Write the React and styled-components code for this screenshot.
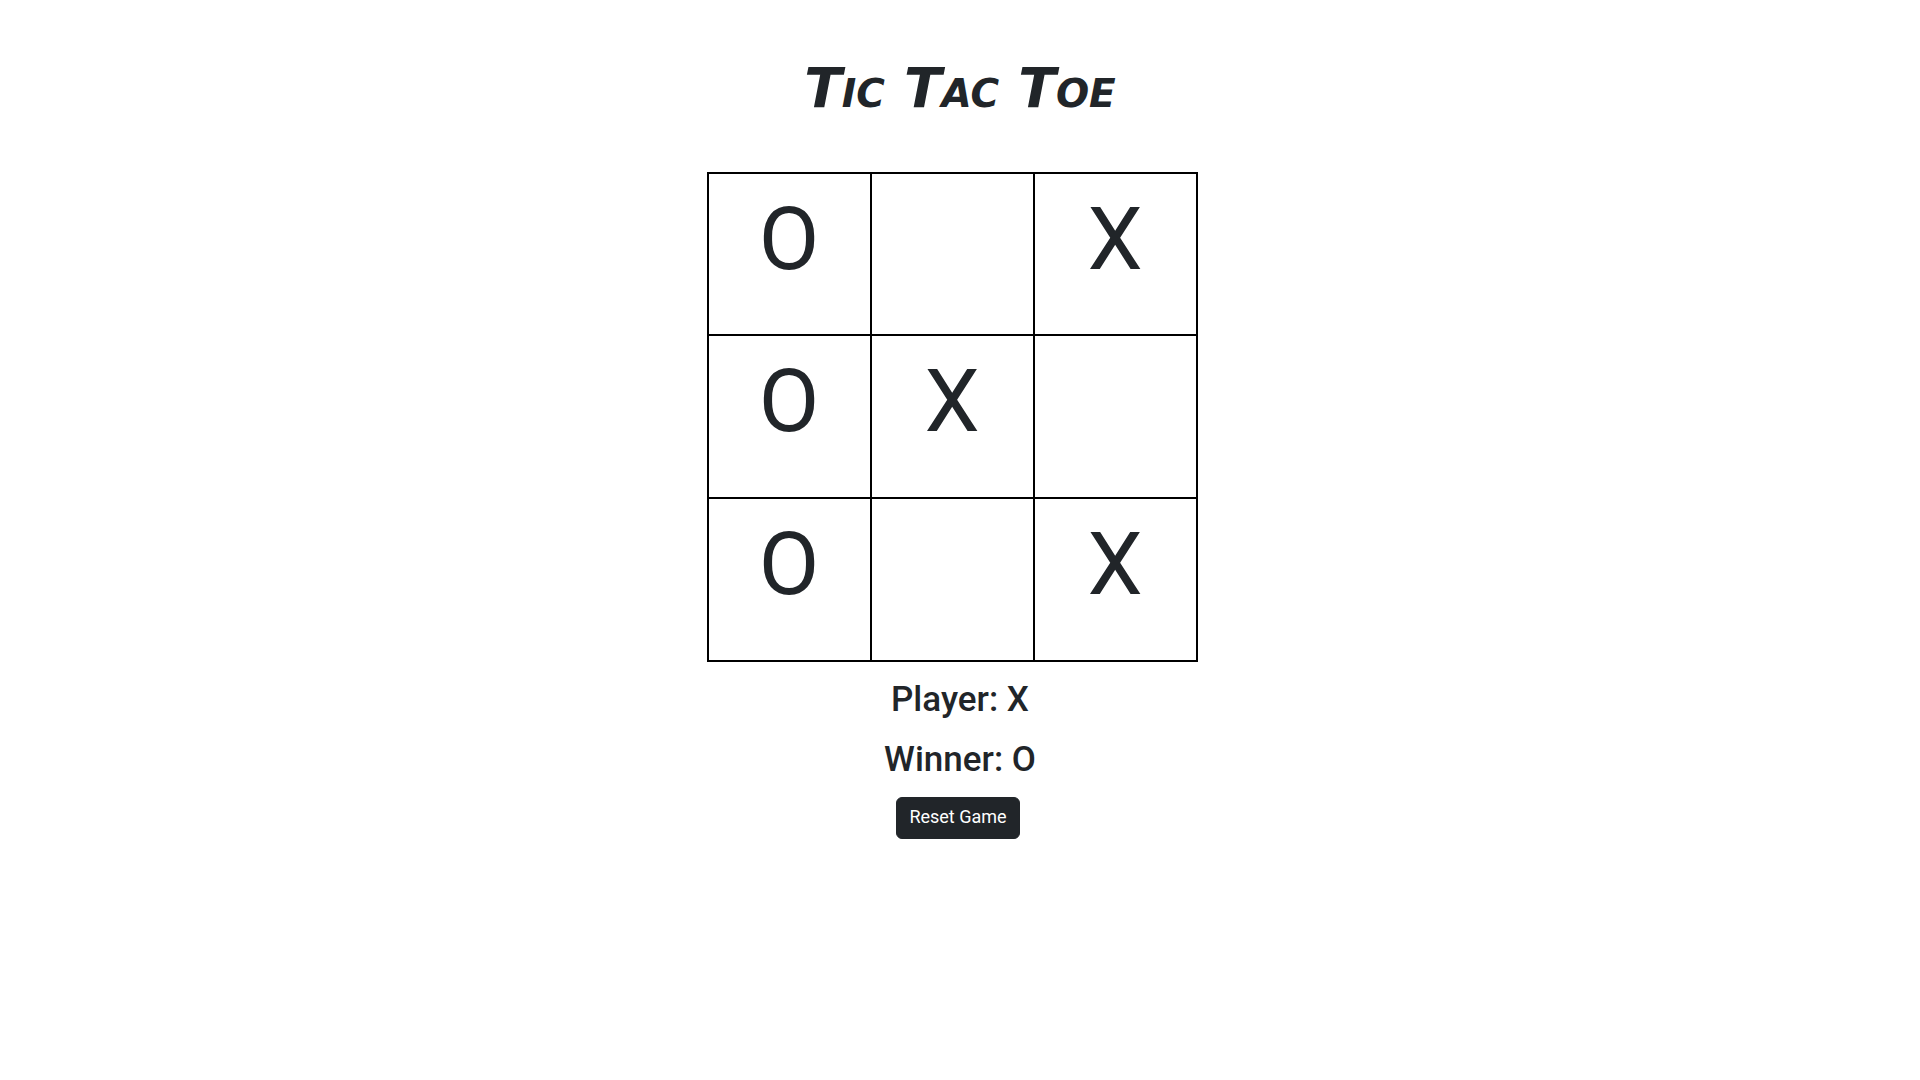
import React, { useState } from "react";
import styled, { createGlobalStyle } from "styled-components";

const GlobalStyle = createGlobalStyle`
  *, *::before, *::after { box-sizing: border-box; }
  body {
    margin: 0;
    background: #fff;
    color: #212529;
    font-family: Roboto, "Liberation Sans", sans-serif;
  }
`;

const Page = styled.main`
  display: flex;
  flex-direction: column;
  align-items: center;
  padding: 48px 16px;
`;

const Title = styled.h1`
  margin: 0 0 44px;
  font-family: "Permanent Marker", "DejaVu Sans", sans-serif;
  font-size: 55px;
  font-weight: 700;
  font-style: italic;
  font-variant: small-caps;
  line-height: 80px;
`;

const Board = styled.div`
  display: grid;
  grid-template-columns: repeat(3, 163px);
  grid-template-rows: 162px 163px 163px;
  margin-right: 16px;
  border: solid #000;
  border-width: 2px 0 0 2px;
`;

const Cell = styled.button`
  display: flex;
  align-items: flex-start;
  justify-content: center;
  padding: 0;
  border: solid #000;
  border-width: 0 2px 2px 0;
  background: #fff;
  color: inherit;
  font-family: inherit;
  font-size: 88px;
  line-height: 130px;
  cursor: pointer;
`;

const Status = styled.h2`
  margin: 16px 0 0;
  font-size: 35px;
  font-weight: 500;
  line-height: 44px;
`;

const ResetButton = styled.button`
  margin: 15px 4px 0 0;
  padding: 5px 12px 7px;
  border: 1px solid #212529;
  border-radius: 6px;
  background: #212529;
  color: #fff;
  font-family: inherit;
  font-size: 18px;
  line-height: 28px;
  cursor: pointer;
`;

const LINES = [
  [0, 1, 2], [3, 4, 5], [6, 7, 8],
  [0, 3, 6], [1, 4, 7], [2, 5, 8],
  [0, 4, 8], [2, 4, 6],
];

const START = ["O", "", "X", "O", "X", "", "O", "", "X"];

function findWinner(cells) {
  const line = LINES.find(([a, b, c]) => cells[a] && cells[a] === cells[b] && cells[a] === cells[c]);
  return line ? cells[line[0]] : "";
}

export default function App() {
  const [cells, setCells] = useState(START);
  const [player, setPlayer] = useState("X");
  const winner = findWinner(cells);

  const play = (index) => {
    if (winner || cells[index]) return;
    setCells(cells.map((value, i) => (i === index ? player : value)));
    setPlayer(player === "X" ? "O" : "X");
  };

  const reset = () => {
    setCells(Array(9).fill(""));
    setPlayer("X");
  };

  return (
    <>
      <GlobalStyle />
      <Page>
        <Title>Tic Tac Toe</Title>
        <Board>
          {cells.map((value, i) => (
            <Cell key={i} type="button" aria-label={value ? undefined : `Cell ${i + 1}`} onClick={() => play(i)}>
              {value}
            </Cell>
          ))}
        </Board>
        <Status>Player: {player}</Status>
        {winner && <Status>Winner: {winner}</Status>}
        <ResetButton type="button" onClick={reset}>Reset Game</ResetButton>
      </Page>
    </>
  );
}
